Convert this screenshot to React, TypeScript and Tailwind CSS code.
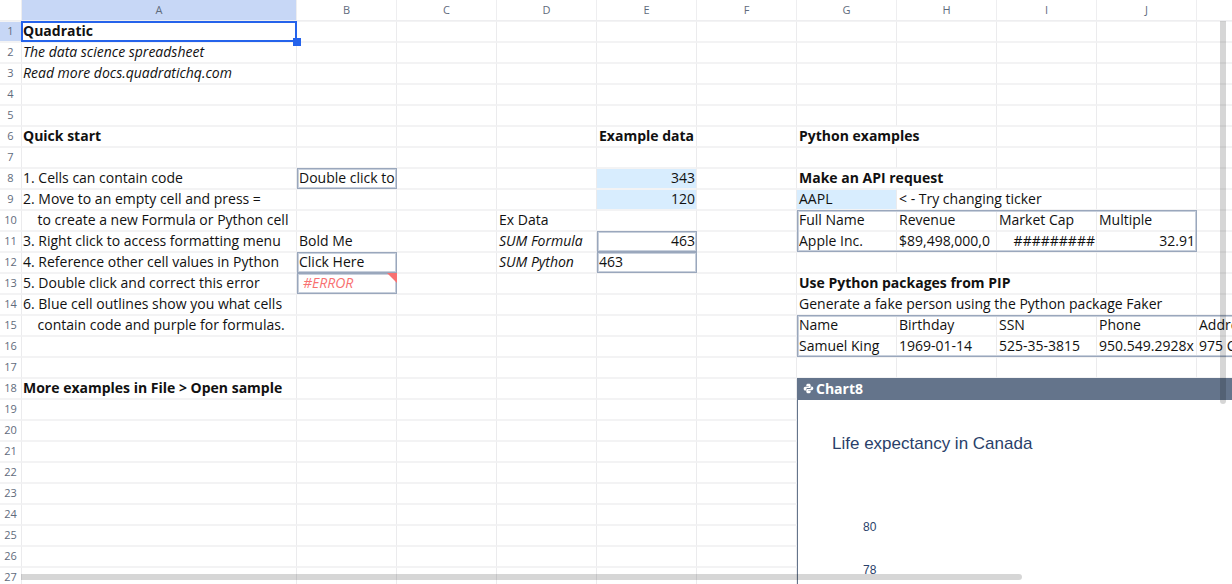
type Cell = {
  col: number; // 1 = A
  row: number;
  text: string;
  span?: number;
  bold?: boolean;
  italic?: boolean;
  right?: boolean;
  fill?: boolean;
  cls?: string;
};

const COLS = ["A", "B", "C", "D", "E", "F", "G", "H", "I", "J", ""];
const ROWS = Array.from({ length: 27 }, (_, i) => i + 1);

const cells: Cell[] = [
  { col: 1, row: 1, text: "Quadratic", bold: true },
  { col: 1, row: 2, text: "The data science spreadsheet", italic: true },
  { col: 1, row: 3, text: "Read more docs.quadratichq.com", italic: true },
  { col: 1, row: 6, text: "Quick start", bold: true },
  { col: 1, row: 8, text: "1. Cells can contain code" },
  { col: 1, row: 9, text: "2. Move to an empty cell and press =" },
  { col: 1, row: 10, text: "    to create a new Formula or Python cell" },
  { col: 1, row: 11, text: "3. Right click to access formatting menu" },
  { col: 1, row: 12, text: "4. Reference other cell values in Python" },
  { col: 1, row: 13, text: "5. Double click and correct this error" },
  { col: 1, row: 14, text: "6. Blue cell outlines show you what cells" },
  { col: 1, row: 15, text: "    contain code and purple for formulas." },
  { col: 1, row: 18, text: "More examples in File > Open sample", bold: true },
  { col: 2, row: 8, text: "Double click to" },
  { col: 2, row: 11, text: "Bold Me" },
  { col: 2, row: 12, text: "Click Here" },
  { col: 2, row: 13, text: "#ERROR", italic: true, cls: "pl-[6px] text-[#f87171]" },
  { col: 4, row: 10, text: "Ex Data" },
  { col: 4, row: 11, text: "SUM Formula", italic: true },
  { col: 4, row: 12, text: "SUM Python", italic: true },
  { col: 5, row: 6, text: "Example data", bold: true },
  { col: 5, row: 8, text: "343", right: true, fill: true },
  { col: 5, row: 9, text: "120", right: true, fill: true },
  { col: 5, row: 11, text: "463", right: true },
  { col: 5, row: 12, text: "463" },
  { col: 7, row: 6, text: "Python examples", bold: true, span: 2 },
  { col: 7, row: 8, text: "Make an API request", bold: true, span: 2 },
  { col: 7, row: 9, text: "AAPL", fill: true },
  { col: 8, row: 9, text: "< - Try changing ticker", span: 2 },
  { col: 7, row: 10, text: "Full Name" },
  { col: 8, row: 10, text: "Revenue" },
  { col: 9, row: 10, text: "Market Cap" },
  { col: 10, row: 10, text: "Multiple" },
  { col: 7, row: 11, text: "Apple Inc." },
  { col: 8, row: 11, text: "$89,498,000,0" },
  { col: 9, row: 11, text: "#########", right: true },
  { col: 10, row: 11, text: "32.91", right: true },
  { col: 7, row: 13, text: "Use Python packages from PIP", bold: true, span: 3 },
  { col: 7, row: 14, text: "Generate a fake person using the Python package Faker", span: 4 },
  { col: 7, row: 15, text: "Name" },
  { col: 8, row: 15, text: "Birthday" },
  { col: 9, row: 15, text: "SSN" },
  { col: 10, row: 15, text: "Phone" },
  { col: 11, row: 15, text: "Address" },
  { col: 7, row: 16, text: "Samuel King" },
  { col: 8, row: 16, text: "1969-01-14" },
  { col: 9, row: 16, text: "525-35-3815" },
  { col: 10, row: 16, text: "950.549.2928x" },
  { col: 11, row: 16, text: "975 Cole" },
];

// code cell outlines: [col, row, colSpan, rowSpan]
const outlines = [
  [2, 8, 1, 1],
  [2, 12, 1, 1],
  [2, 13, 1, 1],
  [5, 11, 1, 1],
  [5, 12, 1, 1],
  [7, 10, 4, 2],
  [7, 15, 5, 2],
];

function at(col: number, row: number, colSpan = 1, rowSpan = 1) {
  return { gridColumn: `${col + 1} / span ${colSpan}`, gridRow: `${row + 1} / span ${rowSpan}` };
}

const LINES = "border-t border-r border-b border-t-[#f3f3f4] border-r-[#ebebed] border-b-[#f3f3f4]";

function PythonIcon() {
  return (
    <svg width="11" height="11" viewBox="0 0 16 16" fill="currentColor">
      <path d="M8 1C5.4 1 4.8 2 4.8 3.2V4.8H8.4V5.6H3.2C1.8 5.6 1 6.8 1 8.2S1.8 11 3.2 11H4.6V9.4C4.6 8.2 5.5 7.4 6.6 7.4H9.6C10.5 7.4 11.2 6.7 11.2 5.8V3.2C11.2 2 10.4 1 8 1Z" />
      <path d="M8 15C10.6 15 11.2 14 11.2 12.8V11.2H7.6V10.4H12.8C14.2 10.4 15 9.2 15 7.8S14.2 5 12.8 5H11.9V6.6C11.9 7.8 11 8.6 9.9 8.6H6.4C5.5 8.6 4.8 9.3 4.8 10.2V12.8C4.8 14 5.6 15 8 15Z" />
    </svg>
  );
}

export default function App() {
  const taken = new Set<string>();
  cells.forEach((c) => {
    for (let i = 0; i < (c.span ?? 1); i++) taken.add(`${c.col + i}:${c.row}`);
  });

  return (
    <div className="relative h-[584px] w-[1232px] overflow-hidden bg-white font-['Open_Sans',sans-serif] text-[14px] text-[#111]">
      <div className="grid grid-cols-[21px_276px_repeat(10,100px)] grid-rows-[repeat(28,21px)]">
        {/* corner + column headers */}
        <div className="border-b border-[#f0f0f1]" style={at(0, 0)} />
        {COLS.map((name, i) => (
          <div
            key={i}
            className={`flex items-center justify-center border-r border-b border-[#eeeef0] text-[11px] text-[#5f6b7c] ${
              i === 0 ? "border-l bg-[#c7d7f6]" : ""
            }`}
            style={at(i + 1, 0)}
          >
            {name}
          </div>
        ))}

        {/* row headers + empty cells */}
        {ROWS.map((r) => (
          <div
            key={r}
            className={`flex items-center justify-center border-t border-b border-[#f3f3f4] text-[11px] text-[#5f6b7c] ${
              r === 1 ? "bg-[#c7d7f6]" : ""
            }`}
            style={at(0, r)}
          >
            {r}
          </div>
        ))}
        {ROWS.flatMap((r) =>
          COLS.map((_, i) =>
            taken.has(`${i + 1}:${r}`) ? null : (
              <div
                key={`${i}-${r}`}
                className={`${LINES} ${i === 0 ? "border-l border-l-[#ebebed]" : ""}`}
                style={at(i + 1, r)}
              />
            ),
          ),
        )}

        {/* filled cells */}
        {cells.map((c) => (
          <div
            key={`${c.col}-${c.row}`}
            className={`overflow-hidden ${LINES} pr-[1px] leading-[18px] whitespace-pre ${
              c.col === 1 ? "border-l border-l-[#ebebed] pl-[1px]" : (c.cls ?? "pl-[2px]")
            } ${c.bold ? "font-bold" : ""} ${c.italic ? "italic" : ""} ${c.right ? "text-right" : ""} ${
              c.fill ? "bg-[#d8edfe]" : ""
            }`}
            style={at(c.col, c.row, c.span ?? 1)}
          >
            {c.text}
          </div>
        ))}

        {/* code outlines */}
        {outlines.map(([col, row, cs, rs]) => (
          <div
            key={`${col}-${row}`}
            className="pointer-events-none z-10 border border-[#9aa7bc] shadow-[inset_0_0_0_1px_#c8d0dc]"
            style={at(col, row, cs, rs)}
          />
        ))}

        {/* error flag */}
        <div className="z-10 flex justify-end" style={at(2, 13)}>
          <svg width="10" height="10" viewBox="0 0 10 10">
            <path d="M0 0H10V10Z" fill="#f87171" />
          </svg>
        </div>

        {/* cursor */}
        <div className="relative z-20 border-2 border-[#2563eb]" style={at(1, 1)}>
          <div className="absolute right-[-6px] bottom-[-6px] h-2 w-2 bg-[#2563eb]" />
        </div>

        {/* chart */}
        <div className="z-10 flex flex-col border-l border-[#64748b] bg-white" style={at(7, 18, 5, 10)}>
          <div className="flex h-[22px] shrink-0 items-center gap-[2px] bg-[#64748b] pb-[2px] pl-[5px] text-[14px] font-bold text-white">
            <PythonIcon />
            Chart8
          </div>
          <div className="flex-1 font-['Liberation_Sans',sans-serif] text-[#2a3f6a]">
            <div className="pt-[33px] pl-[34px] text-[17px] leading-[22px]">Life expectancy in Canada</div>
            <div className="mt-[65px] flex flex-col gap-[29px] pl-[65px] text-[12px] leading-[14px]">
              <span>80</span>
              <span>78</span>
            </div>
          </div>
        </div>
      </div>

      {/* overlay scrollbars */}
      <div className="absolute top-[21px] left-[1220px] z-30 h-[383px] w-[6px] rounded-b-[3px] bg-black/[.16]" />
      <div className="absolute top-[574px] left-[21px] z-30 h-[6px] w-[1001px] rounded-r-[3px] bg-black/[.16]" />
    </div>
  );
}
